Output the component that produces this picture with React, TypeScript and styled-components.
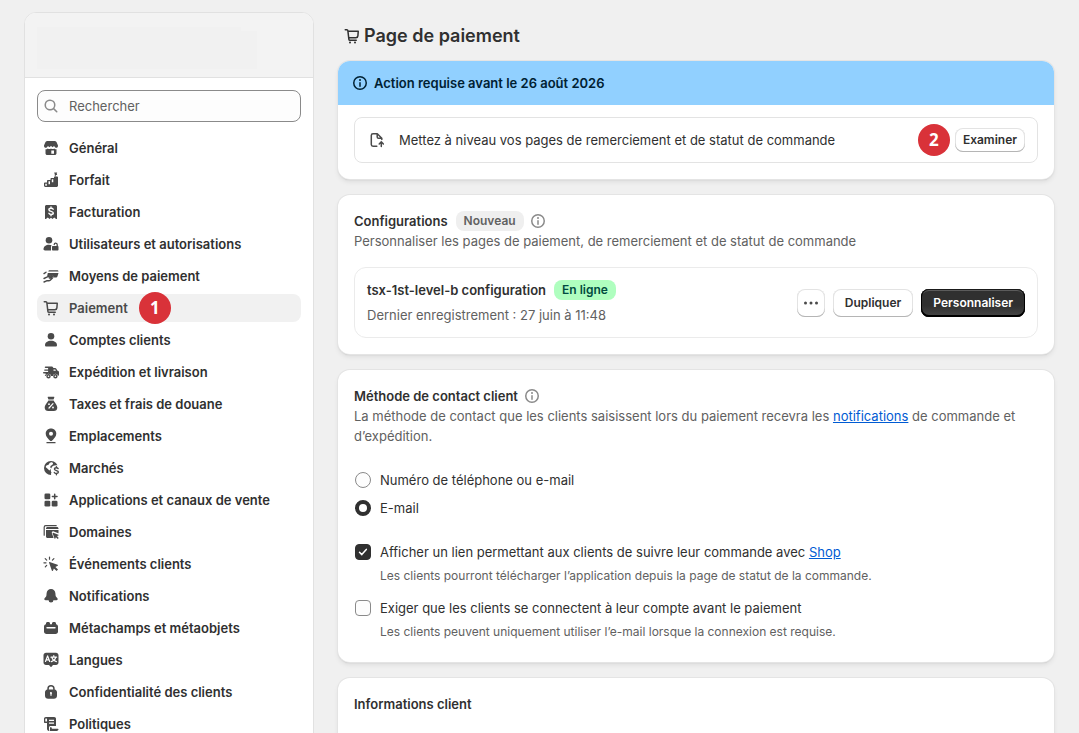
import React from "react";
import styled, { createGlobalStyle, css } from "styled-components";

const GlobalStyle = createGlobalStyle`
  *, *::before, *::after { box-sizing: border-box; }
  body {
    margin: 0;
    background: #f0f0f0;
    color: #303030;
    font-family: Inter, "Liberation Sans", sans-serif;
    font-size: 13px;
    line-height: 20px;
  }
  button, input { font: inherit; color: inherit; }
  h1, h2, h3, p, ul { margin: 0; padding: 0; }
`;

const Page = styled.div`
  display: flex;
  gap: 24px;
  height: 100vh;
  padding: 12px 25px 0 24px;
  overflow: hidden;
`;

const Sidebar = styled.aside`
  flex: 0 0 290px;
  align-self: flex-start;
  background: #fff;
  border: 1px solid #e1e1e1;
  border-radius: 12px;
  overflow: hidden;
`;

const StoreHeader = styled.div`
  display: flex;
  align-items: flex-end;
  height: 65px;
  padding: 0 12px 8px;
  background: #f3f3f3;
  border-bottom: 1px solid #e1e1e1;
`;

const StorePlaceholder = styled.div<{ $width: number; $height: number }>`
  width: ${(p) => p.$width}px;
  height: ${(p) => p.$height}px;
  background: #f1f1f1;
`;

const SidebarBody = styled.div`
  padding: 12px;
`;

const SearchField = styled.label`
  display: flex;
  align-items: center;
  gap: 8px;
  height: 32px;
  margin-bottom: 12px;
  padding: 0 3px;
  border: 1px solid #8a8a8a;
  border-radius: 8px;
  background: #fdfdfd;
  color: #8a8a8a;
`;

const SearchInput = styled.input`
  flex: 1;
  min-width: 0;
  padding: 0;
  border: 0;
  outline: 0;
  background: transparent;
  color: #303030;
  &::placeholder { color: #616161; opacity: 1; }
`;

const NavList = styled.ul`
  display: grid;
  gap: 4px;
  list-style: none;
`;

const NavLink = styled.a<{ $active?: boolean }>`
  display: flex;
  align-items: center;
  gap: 8px;
  height: 28px;
  padding: 0 4px;
  border-radius: 8px;
  color: ${(p) => (p.$active ? "#4a4a4a" : "#303030")};
  background: ${(p) => (p.$active ? "#f1f1f1" : "transparent")};
  font-weight: 580;
  text-decoration: none;
  svg { color: #4a4a4a; }
`;

const StepMarker = styled.span`
  display: inline-flex;
  align-items: center;
  justify-content: center;
  width: 32px;
  height: 32px;
  border-radius: 50%;
  background: #d93239;
  color: #fff;
  font-family: "Open Sans", "Noto Sans", sans-serif;
  font-size: 17px;
  font-weight: 700;
`;

const NavMarker = styled(StepMarker)`
  margin-left: 3px;
`;

const Main = styled.main`
  flex: 1;
  min-width: 0;
  display: flex;
  flex-direction: column;
  gap: 16px;
`;

const PageTitle = styled.h1`
  display: flex;
  flex: none;
  align-items: center;
  gap: 2px;
  height: 48px;
  padding-left: 4px;
  margin-bottom: -15px;
  font-size: 18px;
  font-weight: 580;
  line-height: 24px;
`;

const Card = styled.section<{ $minHeight?: number }>`
  flex: none;
  min-height: ${(p) => p.$minHeight ?? 0}px;
  border-radius: 12px;
  background: #fff;
  overflow: hidden;
  box-shadow: 0 0 0 1px #e4e4e4, 0 1px 1px 0 #b5b5b5, 0 3px 5px rgba(0, 0, 0, 0.08);
`;

const CardBody = styled.div`
  padding: 16px;
`;

const Banner = styled.h2`
  display: flex;
  align-items: center;
  gap: 4px;
  height: 44px;
  padding: 0 12px;
  background: #91d0ff;
  color: #002133;
  font-size: 13px;
  font-weight: 600;
`;

const BannerBody = styled.div`
  padding: 12px 16px 16px;
`;

const TaskRow = styled.div`
  display: flex;
  align-items: center;
  gap: 12px;
  padding: 10px 12px;
  border: 1px solid #e3e3e3;
  border-radius: 8px;
  svg { color: #4a4a4a; }
`;

const Actions = styled.div<{ $gap: number }>`
  display: flex;
  align-items: center;
  gap: ${(p) => p.$gap}px;
  height: 24px;
  margin-left: auto;
`;

const Heading = styled.h2`
  display: flex;
  align-items: center;
  gap: 8px;
  height: 20px;
  font-size: 13px;
  font-weight: 600;
  svg { color: #8a8a8a; }
`;

const InfoSlot = styled.span`
  display: flex;
  margin-left: -4px;
`;

const Subdued = styled.p`
  color: #616161;
`;

const Badge = styled.span<{ $tone?: "success" }>`
  display: inline-block;
  padding: 0 8px;
  border-radius: 8px;
  font-size: 12px;
  font-weight: 580;
  line-height: 20px;
  color: ${(p) => (p.$tone ? "#014b40" : "#616161")};
  background: ${(p) => (p.$tone ? "#affebf" : "#efefef")};
`;

const ConfigRow = styled.div`
  display: flex;
  align-items: center;
  margin-top: 16px;
  padding: 12px;
  border: 1px solid #ebebeb;
  border-radius: 12px;
`;

const ConfigText = styled.div`
  display: grid;
  gap: 5px;
`;

const Button = styled.button<{ $size?: "slim" | "icon"; $primary?: boolean }>`
  display: inline-flex;
  align-items: center;
  justify-content: center;
  flex: none;
  height: ${(p) => (p.$size === "slim" ? 24 : 28)}px;
  padding: 0 ${(p) => (p.$size === "slim" ? 8 : p.$size === "icon" ? 4 : 12)}px;
  border: 0;
  border-radius: 8px;
  background: #fff;
  box-shadow: inset 0 -1px 0 0 #b5b5b5, inset 0 0 0 1px #e3e3e3;
  font-size: 12px;
  font-weight: 600;
  line-height: 16px;
  svg { color: #4a4a4a; }
  ${(p) =>
    p.$primary &&
    css`
      color: #fff;
      background: linear-gradient(180deg, #303030 60%, #484848 100%);
      box-shadow: inset 0 -1px 0 1px #000, inset 0 0 0 1px #1a1a1a, inset 0 2px 0 0 #5c5c5c;
    `}
`;

const TextLink = styled.a`
  color: #005bd3;
  text-decoration: underline;
`;

const ChoiceGroup = styled.div<{ $top: number; $gap?: number }>`
  display: grid;
  gap: ${(p) => p.$gap ?? 0}px;
  margin-top: ${(p) => p.$top}px;
`;

const ChoiceLabel = styled.label`
  display: flex;
  align-items: center;
  gap: 8px;
  height: 28px;
`;

const HelpText = styled.p`
  padding-left: 26px;
  color: #616161;
  font-size: 12px;
  line-height: 20px;
`;

const Radio = styled.input`
  appearance: none;
  width: 16px;
  height: 16px;
  margin: 1px;
  border: 1px solid #8a8a8a;
  border-radius: 50%;
  background: #fdfdfd;
  &:checked { border: 4px solid #303030; background: #fff; }
`;

const CheckSlot = styled.span`
  position: relative;
  display: flex;
  svg {
    position: absolute;
    inset: 1px;
    pointer-events: none;
    color: #fff;
  }
`;

const Checkbox = styled.input`
  appearance: none;
  width: 16px;
  height: 16px;
  margin: 1px;
  border: 1px solid #8a8a8a;
  border-radius: 4px;
  background: #fdfdfd;
  &:checked { border-color: #303030; background: #303030; }
`;

const ChoiceSection = styled.div`
  padding-bottom: 4px;
`;

const IconSvg = styled.svg`
  flex: none;
  display: block;
  width: 20px;
  height: 20px;
  fill: currentColor;
`;

const Line = styled.g<{ $w?: number; $color?: string }>`
  fill: none;
  stroke: ${(p) => p.$color ?? "currentColor"};
  stroke-width: ${(p) => p.$w ?? 1.5};
  stroke-linecap: round;
  stroke-linejoin: round;
`;

const shapes = {
  search: (
    <path fillRule="evenodd" d="M12.323 13.383a5.5 5.5 0 1 1 1.06-1.06l2.897 2.897a.75.75 0 1 1-1.06 1.06l-2.897-2.897Zm.677-4.383a4 4 0 1 1-8 0 4 4 0 0 1 8 0Z" />
  ),
  info: (
    <>
      <path d="M10 14a.75.75 0 0 1-.75-.75v-3.5a.75.75 0 0 1 1.5 0v3.5a.75.75 0 0 1-.75.75Z" />
      <path d="M9 7a1 1 0 1 1 2 0 1 1 0 0 1-2 0Z" />
      <path fillRule="evenodd" d="M17 10a7 7 0 1 1-14 0 7 7 0 0 1 14 0Zm-1.5 0a5.5 5.5 0 1 0-11 0 5.5 5.5 0 0 0 11 0Z" />
    </>
  ),
  store: (
    <>
      <path d="M6.5 3h7c.9 0 1.600.4 2 1.100l1.200 2.600c.2.4.3.8.3 1.200v.2a1.700 1.700 0 0 1-2.900 1.200L13 8l-1.300 1.300L10 8 8.300 9.300 7 8 5.900 9.300A1.700 1.700 0 0 1 3 8.100v-.2c0-.4.1-.8.3-1.200l1.200-2.600c.4-.7 1.100-1.100 2-1.100Z" />
      <path fillRule="evenodd" d="M4.500 11.200c.8 0 1.600-.2 2.300-.8.9.7 2.200.8 3.200 0 1 .8 2.300.7 3.200 0 .7.6 1.500.8 2.300.8v4c0 1-.8 1.800-1.800 1.800H6.300c-1 0-1.800-.8-1.800-1.800v-4Zm5.800 1.300v3.300h2.700v-3.300h-2.700Z" />
    </>
  ),
  plan: (
    <>
      <path fillRule="evenodd" d="M13 7.300c0-.5.4-.8.8-.8h2.400c.5 0 .8.3.8.8v8.200c0 .8-.7 1.500-1.500 1.500h-11C3.700 17 3 16.300 3 15.500v-2.200c0-.5.400-.8.800-.8H6v-1.700c0-.5.400-.8.800-.8H9.500V8.800c0-.5.300-.8.800-.8H13v-.7ZM4.300 13.800v1.900h1.500v-1.900H4.300Zm3.200-2.500v3h1.500v-3H7.500Zm3.300-2v3h1.500v-3h-1.500Z" />
      <path d="M13.200 2.500h3l-.5 1.200.5 1.200h-1.500v1.600h-.9V4.500Z" />
    </>
  ),
  billing: (
    <>
      <path d="M4 4.500C4 3.700 4.700 3 5.500 3h9c.8 0 1.500.7 1.500 1.500v12c0 .5-.5.700-.9.400L13.200 15.600 11.500 17 10 15.700 8.500 17l-1.700-1.400-1.900 1.300c-.4.3-.9.100-.9-.4v-12Z" />
      <Line $w={1.4} $color="#fff"><path d="M12.200 7.200c-.3-.6-1.100-1-2.100-1-1.300 0-2.200.6-2.200 1.500 0 2.200 4.400 1.100 4.400 3.200 0 .9-1 1.500-2.200 1.500-1.100 0-1.900-.4-2.200-1.100M10 4.900v1.200M10 12.500v1.200" /></Line>
    </>
  ),
  users: (
    <>
      <circle cx="8" cy="6.200" r="3.300" />
      <path d="M2.500 15.300c0-2.900 2.500-4.600 5.500-4.600 1 0 1.900.2 2.700.5-.4.400-.7 1-.7 1.800v3.500H4c-1 0-1.500-.5-1.500-1.200Z" />
      <path d="M11 13c0-.6.400-1 1-1h4.500c.6 0 1 .4 1 1v2.500c0 .6-.4 1-1 1H12c-.6 0-1-.4-1-1V13Z" />
      <Line $w={1.3}><path d="M16.200 12v-1.300a1.500 1.500 0 0 0-3-.2" /></Line>
    </>
  ),
  payments: (
    <>
      <path d="M8.500 4.300H16c.8 0 1.500.5 1.500 1.200H7.300c.2-.7.600-1.200 1.200-1.200ZM6.800 7h10.700l-1 3.200c-.2.800-.9 1.300-1.700 1.300h-3c.6-.6.6-1.700-.2-2.200-.5-.3-1-.3-1.600 0l-4 1.500L6.800 7Z" />
      <Line $w={1.400}><path d="M3 7.600 5 6.200M3 12.500l2.800-1.400 4.800-1.600c.9-.2 1.200.9.400 1.300L8.300 12h3.200l-2.300 2.300c-.4.400-.9.500-1.400.5H5.600L3 16" /></Line>
    </>
  ),
  cart: (
    <>
      <path fillRule="evenodd" d="M2.500 3.750a.75.75 0 0 1 .75-.75h1.612a1.750 1.750 0 0 1 1.732 1.500h9.656a.75.75 0 0 1 .748.808l-.358 4.653a2.750 2.750 0 0 1-2.742 2.539h-6.351l.093.780a.25.25 0 0 0 .248.220h6.362a.75.75 0 0 1 0 1.500h-6.362a1.750 1.750 0 0 1-1.738-1.543l-1.040-8.737a.25.25 0 0 0-.248-.220h-1.612a.75.75 0 0 1-.75-.75Zm4.868 7.250h6.530a1.250 1.250 0 0 0 1.246-1.154l.296-3.846h-8.667l.595 5Z" />
      <circle cx="8" cy="16.500" r="1" />
      <circle cx="13" cy="16.500" r="1" />
    </>
  ),
  person: (
    <>
      <circle cx="10" cy="6.200" r="3.300" />
      <path d="M4 15.200c0-2.900 2.600-4.500 6-4.500s6 1.600 6 4.500c0 .8-.6 1.300-1.300 1.300H5.300c-.7 0-1.300-.5-1.300-1.300Z" />
    </>
  ),
  shipping: (
    <>
      <path fillRule="evenodd" d="M4.500 4.500h6c1 0 1.700.7 1.900 1.500H14c.6 0 1.200.3 1.500.9l.8 1.600 1 .4c.5.2.7.700.7 1.200v2.400c0 .7-.4 1.200-1 1.400a2.600 2.600 0 0 0-5.100 0h-1.800a2.600 2.600 0 0 0-5.100 0c-.6 0-1.100-.4-1.300-.9h.9V11.500H2.700a.7.700 0 0 1 0-1.400h4.400V8.800H3.800a.7.700 0 0 1 0-1.400h3.300V6H4.500a.75.75 0 0 1 0-1.500Zm8 3v1.300h2.400l-.6-1.300h-1.800Z" />
      <Line $w={1.400}><circle cx="7.500" cy="14.300" r="1.500" /><circle cx="14.400" cy="14.300" r="1.500" /></Line>
    </>
  ),
  taxes: (
    <>
      <path d="M7.300 2.700h5.400c.5 0 .8.500.6.900L12.500 5.500h-5l-.8-1.900c-.2-.4.100-.9.600-.9ZM7.300 6.500h5.400c.2 1.500 3.600 4 3.600 7.200 0 2-1.500 3.300-3.500 3.300H7.200c-2 0-3.500-1.300-3.500-3.300 0-3.200 3.400-5.700 3.600-7.200Z" />
      <Line $w={1.200} $color="#fff"><path d="m8 14 4-4.300" /></Line>
      <circle cx="8" cy="10.200" r=".9" fill="#fff" />
      <circle cx="12" cy="13.500" r=".9" fill="#fff" />
    </>
  ),
  location: (
    <>
      <path fillRule="evenodd" d="M10 2.500c3 0 5.300 2.200 5.300 5.100 0 2.800-1.900 4.600-3.100 6-.7.800-1.300 1.500-2.200 1.500s-1.500-.7-2.200-1.500c-1.200-1.400-3.100-3.200-3.100-6 0-2.900 2.300-5.100 5.300-5.100Zm0 3.300a2 2 0 1 0 0 4 2 2 0 0 0 0-4Z" />
      <Line $w={1.300}><path d="M6 16.700h8" /></Line>
    </>
  ),
  markets: (
    <>
      <circle cx="10" cy="10" r="7" />
      <path d="M9.700 4.400c.9-.2 2 .1 2.300.9.200.8-.4 1.300-1.100 1.700-.9.500-1.500 1-1.600 1.900-.1.700.6 1.200 1.400 1.400l-2.300 2.200c-.9-.5-1.100-1.200-1.800-1.700L4.800 9.300c-.2-1 .4-1.800 1.300-2.100.9-.3 1.700-.5 2-1.300.2-.7.700-1.300 1.600-1.500Z" fill="#fff" />
      <path d="M10.500 9.700c.9-1.700 3-2.500 4.800-2.400h3V18H11c-1.300-1.300-1.200-2.500-.5-3.600-1-1.300-1-3-.0-4.700Z" fill="#fff" />
      <Line $w={1.400}><path d="M17.100 10.600c-.3-.6-1-.9-1.800-.9-1.100 0-1.900.5-1.900 1.400 0 2 4 1 4 3 0 .9-.9 1.400-2 1.400-1 0-1.800-.4-2.100-1M15.400 8.600v1M15.400 15.500v1.200" /></Line>
    </>
  ),
  apps: (
    <>
      <rect x="3.500" y="3.500" width="5.800" height="5.800" rx="1.300" />
      <rect x="3.500" y="10.700" width="5.800" height="5.800" rx="1.300" />
      <rect x="10.700" y="10.700" width="5.800" height="5.800" rx="1.300" />
      <Line $w={1.500}><path d="M13.700 4.200v4.600M11.400 6.500H16" /></Line>
    </>
  ),
  domains: (
    <>
      <Line $w={1.200}><path d="M3.200 13.200V5.200c0-.9.600-1.500 1.500-1.500h10.500" /></Line>
      <path d="M5 6.500C5 5.700 5.700 5 6.500 5H16c.8 0 1.500.7 1.500 1.500V7H5v-.5ZM5 8h12.500v3.200l-4.800-1.800c-1.200-.4-2.200.6-1.800 1.800l1.700 4.800H6.500c-.8 0-1.500-.7-1.500-1.500V8Z" />
      <path d="m12.200 10.700 5.200 2c.4.100.4.600 0 .8l-1.400.6 1.700 1.800-1 1-1.800-1.700-.6 1.300c-.1.400-.7.400-.8 0l-1.900-5.200c-.2-.4.200-.8.600-.6Z" />
    </>
  ),
  events: (
    <>
      <path d="m8.600 8 8 2.800c.5.200.5.800.1 1l-2.300 1.100 2.600 2.700-1.400 1.400-2.700-2.600-1 2.300c-.3.400-.9.400-1.100-.1L8 8.600c-.1-.4.200-.7.600-.6Z" />
      <Line $w={1.200}><path d="M8.500 3v2.200M4.200 4.700l1.500 1.500M2.900 8.800H5M5.700 11.400l-1.400 1.500M12.900 4.700l-1.500 1.500" /></Line>
    </>
  ),
  bell: (
    <path d="M10 3c2.500 0 4.200 1.900 4.400 4.300l.2 2.300c0 .6.300 1.100.7 1.500l.9.900c1 1 .5 2.200-.9 2.200h-2.900a2.400 2.400 0 0 1-4.800 0H4.700c-1.400 0-1.900-1.200-.9-2.200l.9-.9c.4-.4.700-.9.700-1.500l.2-2.300C5.800 4.900 7.500 3 10 3Z" />
  ),
  metafields: (
    <>
      <path d="M5 6.200V5.500C5 4.700 5.600 4 6.500 4h1C8.400 4 9 4.700 9 5.500v.7h2v-.7c0-.8.600-1.500 1.500-1.500h1c.9 0 1.500.7 1.500 1.500v.7c1.200.2 2 1.100 2 2.300v.7H3v-.7c0-1.200.800-2.100 2-2.300Z" />
      <path d="M3 9h14v4.500c0 1.500-1 2.500-2.500 2.500h-9C4 16 3 15 3 13.500V9Z" />
      <Line $w={1.400} $color="#fff"><path d="M6 9.700h8" /></Line>
    </>
  ),
  languages: (
    <>
      <path d="M5 2.800h10c1.400 0 2.500 1.100 2.500 2.500v7.200c0 1.400-1.100 2.500-2.500 2.500h-3l-1.500 1.700c-.3.300-.7.300-1 0L8 15H5c-1.400 0-2.500-1.100-2.500-2.500V5.300c0-1.400 1.100-2.500 2.500-2.500Z" />
      <Line $w={1.200} $color="#fff"><path d="m4.500 11.500 2.100-5.600 2.100 5.600M5.300 9.800h2.700M10 7.200h5.600M12.800 5.600v1.600M14.700 7.200c-.3 1.900-1.800 3.600-4.300 4.400M10.900 7.200c.3 1.900 1.900 3.600 4.500 4.400" /></Line>
    </>
  ),
  lock: (
    <path fillRule="evenodd" d="M6.300 7.500V6.700a3.700 3.700 0 0 1 7.400 0v.8c1.300.2 2.300 1.300 2.300 2.700v3.500c0 1.800-1.300 3.100-3.100 3.100H7.100C5.300 16.800 4 15.500 4 13.700v-3.500c0-1.400 1-2.500 2.300-2.700Zm1.500 0h4.400V6.700a2.200 2.200 0 0 0-4.400 0v.8Zm3.300 3.600a1.100 1.100 0 1 0-1.700.9v1.700h1.200V12c.3-.2.5-.5.5-.9Z" />
  ),
  policies: (
    <>
      <path fillRule="evenodd" d="M4.800 3h8.400c1 0 1.800.8 1.800 1.800V12H9.500c-.8 0-1.500.7-1.500 1.500V17c-1.200-.1-2-1-2-2.200V9H4C3.400 9 3 8.600 3 8V4.800C3 3.800 3.800 3 4.800 3Zm0 1.400c-.3 0-.5.200-.5.500v2.700H6V4.900c0-.3-.2-.5-.5-.5h-.7ZM8 5.800v1.200h5V5.800H8Zm0 2.800v1.200h5V8.600H8Z" />
      <path d="M9 13.300h1.500c0 1 .5 1.500 1.300 1.500h5c.5 0 .8.300.7.8-.2.800-.9 1.400-1.800 1.400H8.500c.3-.5.500-1 .5-1.700v-2Z" />
    </>
  ),
  pageUp: (
    <Line $w={1.500}>
      <path d="M9.800 16.300H6A1.700 1.700 0 0 1 4.300 14.600V5.400c0-.9.700-1.700 1.700-1.700h4.300l4.500 4.500v1.300M10.200 3.900v3c0 .8.600 1.400 1.400 1.400h3M14.300 16.500v-4.300M12.200 14l2.100-2.100 2.100 2.100" />
    </Line>
  ),
  more: (
    <>
      <circle cx="4.500" cy="10" r="1.500" />
      <circle cx="10" cy="10" r="1.500" />
      <circle cx="15.500" cy="10" r="1.500" />
    </>
  ),
};

type IconName = keyof typeof shapes;

const Icon = ({ name }: { name: IconName }) => (
  <IconSvg viewBox="0 0 20 20" aria-hidden="true">
    {shapes[name]}
  </IconSvg>
);

const TickSvg = styled.svg`
  width: 16px;
  height: 16px;
`;

const navItems: { icon: IconName; label: string; active?: boolean }[] = [
  { icon: "store", label: "Général" },
  { icon: "plan", label: "Forfait" },
  { icon: "billing", label: "Facturation" },
  { icon: "users", label: "Utilisateurs et autorisations" },
  { icon: "payments", label: "Moyens de paiement" },
  { icon: "cart", label: "Paiement", active: true },
  { icon: "person", label: "Comptes clients" },
  { icon: "shipping", label: "Expédition et livraison" },
  { icon: "taxes", label: "Taxes et frais de douane" },
  { icon: "location", label: "Emplacements" },
  { icon: "markets", label: "Marchés" },
  { icon: "apps", label: "Applications et canaux de vente" },
  { icon: "domains", label: "Domaines" },
  { icon: "events", label: "Événements clients" },
  { icon: "bell", label: "Notifications" },
  { icon: "metafields", label: "Métachamps et métaobjets" },
  { icon: "languages", label: "Langues" },
  { icon: "lock", label: "Confidentialité des clients" },
  { icon: "policies", label: "Politiques" },
];

const Check = ({ id, checked }: { id: string; checked?: boolean }) => (
  <CheckSlot>
    <Checkbox id={id} type="checkbox" defaultChecked={checked} />
    {checked && (
      <TickSvg viewBox="0 0 16 16" aria-hidden="true">
        <Line><path d="m4.500 8.300 2.300 2.300 4.500-5.200" /></Line>
      </TickSvg>
    )}
  </CheckSlot>
);

export default function App() {
  return (
    <>
      <GlobalStyle />
      <Page>
        <Sidebar>
          <StoreHeader>
            <StorePlaceholder $width={204} $height={42} />
            <StorePlaceholder $width={16} $height={38} />
          </StoreHeader>
          <SidebarBody>
            <SearchField>
              <Icon name="search" />
              <SearchInput type="text" placeholder="Rechercher" aria-label="Rechercher" />
            </SearchField>
            <nav>
              <NavList>
                {navItems.map((item) => (
                  <li key={item.label}>
                    <NavLink href="#" $active={item.active}>
                      <Icon name={item.icon} />
                      {item.label}
                      {item.active && <NavMarker>1</NavMarker>}
                    </NavLink>
                  </li>
                ))}
              </NavList>
            </nav>
          </SidebarBody>
        </Sidebar>

        <Main>
          <PageTitle>
            <Icon name="cart" />
            Page de paiement
          </PageTitle>

          <Card>
            <Banner>
              <Icon name="info" />
              Action requise avant le 26 août 2026
            </Banner>
            <BannerBody>
              <TaskRow>
                <Icon name="pageUp" />
                <p>Mettez à niveau vos pages de remerciement et de statut de commande</p>
                <Actions $gap={5}>
                  <StepMarker>2</StepMarker>
                  <Button $size="slim">Examiner</Button>
                </Actions>
              </TaskRow>
            </BannerBody>
          </Card>

          <Card>
            <CardBody>
              <Heading>
                Configurations
                <Badge>Nouveau</Badge>
                <InfoSlot><Icon name="info" /></InfoSlot>
              </Heading>
              <Subdued>Personnaliser les pages de paiement, de remerciement et de statut de commande</Subdued>
              <ConfigRow>
                <ConfigText>
                  <Heading as="h3">
                    tsx-1st-level-b configuration
                    <Badge $tone="success">En ligne</Badge>
                  </Heading>
                  <Subdued>Dernier enregistrement : 27 juin à 11:48</Subdued>
                </ConfigText>
                <Actions $gap={8}>
                  <Button $size="icon" aria-label="Plus d’actions"><Icon name="more" /></Button>
                  <Button>Dupliquer</Button>
                  <Button $primary>Personnaliser</Button>
                </Actions>
              </ConfigRow>
            </CardBody>
          </Card>

          <Card>
            <CardBody>
              <Heading>
                Méthode de contact client
                <InfoSlot><Icon name="info" /></InfoSlot>
              </Heading>
              <Subdued>
                La méthode de contact que les clients saisissent lors du paiement recevra les{" "}
                <TextLink href="#">notifications</TextLink> de commande et d’expédition.
              </Subdued>
              <ChoiceSection>
                <ChoiceGroup $top={20}>
                  <ChoiceLabel>
                    <Radio type="radio" name="contact" />
                    Numéro de téléphone ou e-mail
                  </ChoiceLabel>
                  <ChoiceLabel>
                    <Radio type="radio" name="contact" defaultChecked />
                    E-mail
                  </ChoiceLabel>
                </ChoiceGroup>
                <ChoiceGroup $top={16} $gap={8}>
                  <div>
                    <ChoiceLabel htmlFor="shop-link">
                      <Check id="shop-link" checked />
                      <span>
                        Afficher un lien permettant aux clients de suivre leur commande avec{" "}
                        <TextLink href="#">Shop</TextLink>
                      </span>
                    </ChoiceLabel>
                    <HelpText>Les clients pourront télécharger l’application depuis la page de statut de la commande.</HelpText>
                  </div>
                  <div>
                    <ChoiceLabel htmlFor="require-login">
                      <Check id="require-login" />
                      Exiger que les clients se connectent à leur compte avant le paiement
                    </ChoiceLabel>
                    <HelpText>Les clients peuvent uniquement utiliser l’e-mail lorsque la connexion est requise.</HelpText>
                  </div>
                </ChoiceGroup>
              </ChoiceSection>
            </CardBody>
          </Card>

          <Card $minHeight={120}>
            <CardBody>
              <Heading>Informations client</Heading>
            </CardBody>
          </Card>
        </Main>
      </Page>
    </>
  );
}
